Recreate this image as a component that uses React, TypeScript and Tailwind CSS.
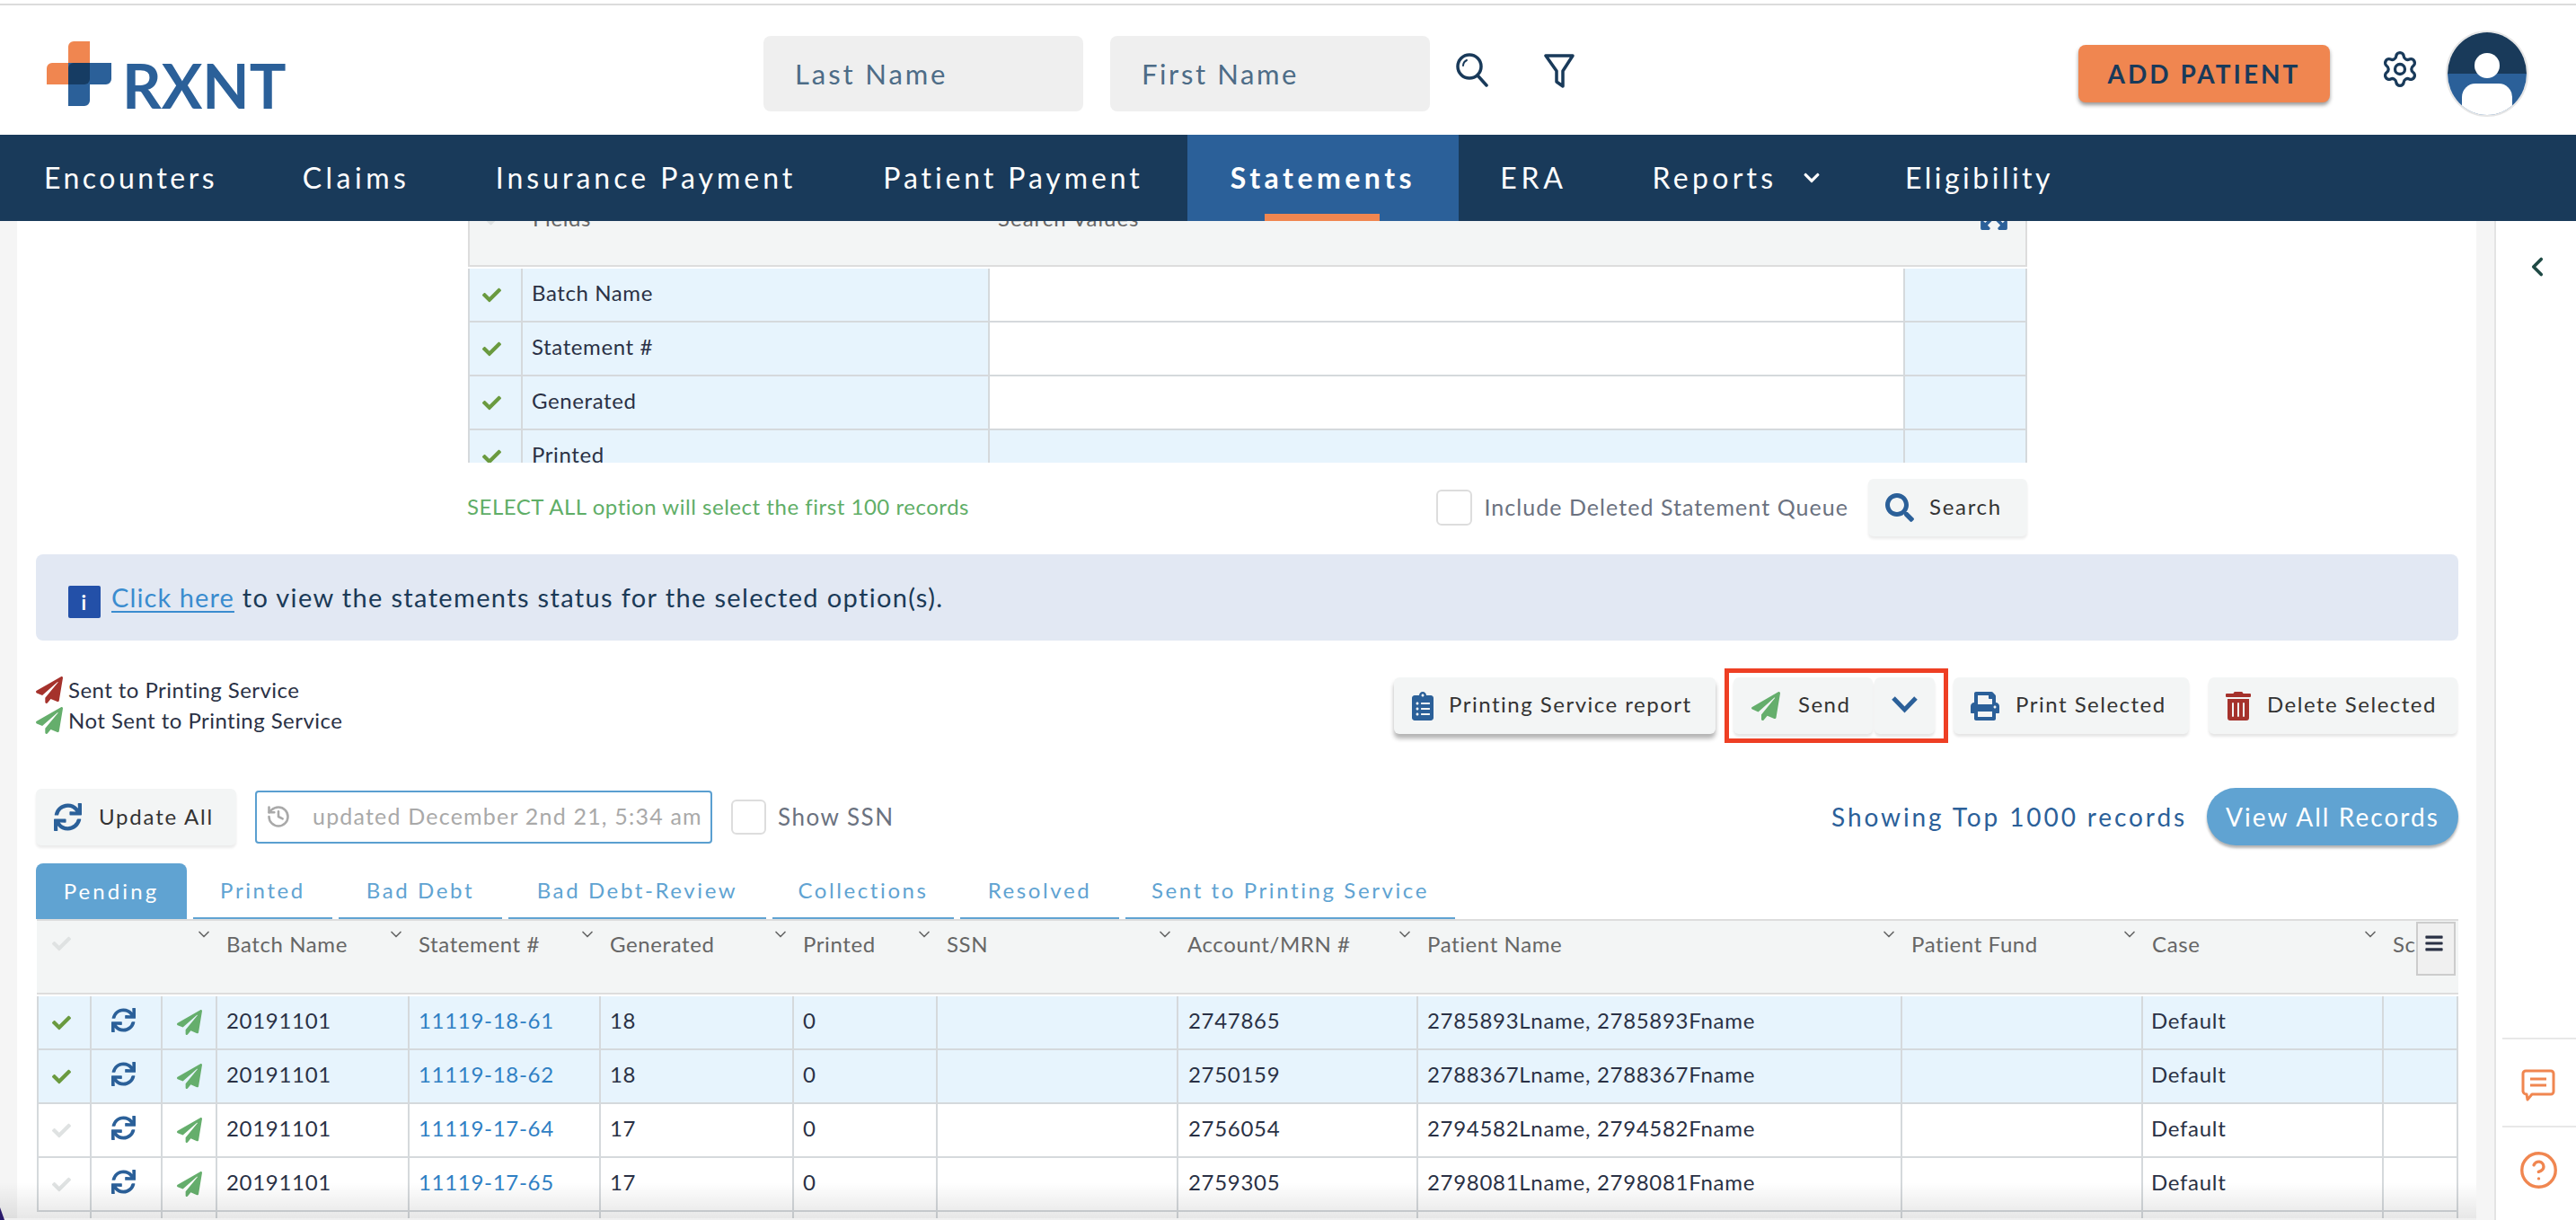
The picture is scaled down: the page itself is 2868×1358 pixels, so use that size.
import React from 'react';
import { ChevronDown, ChevronLeft, CircleHelp, History, Settings } from 'lucide-react';
import {
  FaBars,
  FaCheck,
  FaChevronDown,
  FaClipboardList,
  FaExpandArrowsAlt,
  FaPaperPlane,
  FaPrint,
  FaSearch,
  FaSync,
  FaTrashAlt,
} from 'react-icons/fa';

const navItems = [
  { label: 'Encounters', width: 'w-[287px] tracking-[3.5px]' },
  { label: 'Claims', width: 'w-[215px] tracking-[4.5px]' },
  { label: 'Insurance Payment', width: 'w-[430px] tracking-[4px]' },
  { label: 'Patient Payment', width: 'w-[388px] tracking-[3.9px]' },
  { label: 'Statements', width: 'w-[302px] tracking-[4.5px]', active: true },
  { label: 'ERA', width: 'w-[167px] tracking-[4.8px]' },
  { label: 'Reports', width: 'w-[284px] tracking-[4.3px]', caret: true },
  { label: 'Eligibility', width: 'w-[257px] tracking-[3.5px]' },
];

const tabs = [
  { label: 'Printed', width: 'w-[155px]' },
  { label: 'Bad Debt', width: 'w-[182px]' },
  { label: 'Bad Debt-Review', width: 'w-[287px]' },
  { label: 'Collections', width: 'w-[202px]' },
  { label: 'Resolved', width: 'w-[177px]' },
  { label: 'Sent to Printing Service', width: 'w-[367px]' },
];

const columns = ['Batch Name', 'Statement #', 'Generated', 'Printed', 'SSN', 'Account/MRN #', 'Patient Name', 'Patient Fund', 'Case', 'Sc'];

const rows = [
  { selected: true, statement: '11119-18-61', generated: '18', account: '2747865', patient: '2785893Lname, 2785893Fname' },
  { selected: true, statement: '11119-18-62', generated: '18', account: '2750159', patient: '2788367Lname, 2788367Fname' },
  { selected: false, statement: '11119-17-64', generated: '17', account: '2756054', patient: '2794582Lname, 2794582Fname' },
  { selected: false, statement: '11119-17-65', generated: '17', account: '2759305', patient: '2798081Lname, 2798081Fname' },
];

const gridCols = 'grid grid-cols-[61px_79px_61px_214px_213px_215px_160px_268px_267px_539px_268px_268px_83px]';
const cell = 'border-r-2 border-[#d5d9dc] flex items-center overflow-hidden';

const filterRows = [
  { label: 'Batch Name', blue: false },
  { label: 'Statement #', blue: false },
  { label: 'Generated', blue: false },
  { label: 'Printed', blue: true },
];

const Logo = () => (
  <div className="flex items-start ml-[52px] mt-[46px] h-[72px]">
    <svg width="72" height="72" viewBox="0 0 72 72" className="shrink-0">
      <path d="M24 24V6a6 6 0 0 1 6-6h18v48H0V30a6 6 0 0 1 6-6z" fill="#f08650" />
      <path d="M24 24h48v18a6 6 0 0 1-6 6H48v18a6 6 0 0 1-6 6H24z" fill="#2b6099" />
      <path d="M24 30a6 6 0 0 1 6-6h18v18a6 6 0 0 1-6 6H24z" fill="#163c63" />
    </svg>
    <span className="ml-[12px] mt-[15px] text-[68px] leading-[68px] font-bold text-[#2b6099] font-['Lato',sans-serif]">RXNT</span>
  </div>
);

const Avatar = () => (
  <svg width="92" height="96" viewBox="0 0 92 96" className="shrink-0">
    <defs>
      <clipPath id="avatarClip">
        <ellipse cx="46" cy="48" rx="44" ry="46" />
      </clipPath>
    </defs>
    <ellipse cx="46" cy="48" rx="45" ry="47" fill="#fff" stroke="#e6e6e6" strokeWidth="2" />
    <g clipPath="url(#avatarClip)">
      <rect x="0" y="0" width="92" height="48" fill="#193a5a" />
      <rect x="0" y="48" width="92" height="48" fill="#2b6099" />
      <ellipse cx="46" cy="39" rx="14" ry="14" fill="#fff" />
      <path d="M18 96V74a15 15 0 0 1 15-15h26a15 15 0 0 1 15 15v22z" fill="#fff" />
    </g>
  </svg>
);

const ActionButton = ({ className, children }: { className: string; children: React.ReactNode }) => (
  <button className={`h-[63px] flex items-center bg-[#f3f5f5] rounded-[6px] shadow-[0_3px_3px_rgba(0,0,0,0.1)] text-[24px] text-[#333] tracking-[1.5px] ${className}`}>
    {children}
  </button>
);

export default function App() {
  return (
    <div className="relative w-[2868px] h-[1358px] overflow-hidden flex flex-col bg-white font-['Lato',sans-serif]">
      <header className="h-[150px] shrink-0 flex relative border-t-2 border-[#dcdcdc] mt-[4px] -mb-[4px]">
        <div className="w-[850px] shrink-0 -mt-[6px]">
          <Logo />
        </div>
        <div className="flex mt-[34px] gap-[30px]">
          <div className="w-[356px] h-[84px] rounded-[8px] bg-[#efefef] flex items-center pl-[35px] text-[31px] tracking-[2.9px] text-[#4d6c87]">Last Name</div>
          <div className="w-[356px] h-[84px] rounded-[8px] bg-[#efefef] flex items-center pl-[35px] text-[31px] tracking-[2.6px] text-[#4d6c87]">First Name</div>
        </div>
        <svg width="36" height="38" viewBox="0 0 36 38" fill="none" stroke="#193a5a" strokeWidth="3.5" strokeLinecap="round" className="ml-[29px] mt-[53px]">
          <circle cx="15" cy="15" r="13" />
          <path d="M25 26l9 10" />
          <path d="M8 14a7 7 0 0 1 4-6" strokeWidth="2" />
        </svg>
        <svg width="34" height="40" viewBox="0 0 34 40" fill="none" stroke="#193a5a" strokeWidth="3.5" strokeLinejoin="round" className="ml-[62px] mt-[53px]">
          <path d="M2 3h30L21 20v17l-7-5V20z" />
        </svg>
        <button className="ml-[561px] mt-[44px] w-[280px] h-[64px] rounded-[8px] bg-[#f08650] shadow-[0_3px_4px_rgba(0,0,0,0.4)] text-[#193a5a] font-bold text-[28px] tracking-[3px]">
          ADD PATIENT
        </button>
        <Settings className="ml-[56px] mt-[49px] text-[#193a5a]" size={44} strokeWidth={1.8} />
        <div className="ml-[29px] mt-[28px]">
          <Avatar />
        </div>
      </header>

      <nav className="h-[96px] shrink-0 bg-[#193a5a] flex pl-[2px] relative z-10 text-white text-[32px]">
        {navItems.map(item => (
          <div
            key={item.label}
            className={`${item.width} relative flex items-center justify-center gap-[28px] ${item.active ? 'bg-[#2b6099] font-bold' : ''}`}
          >
            {item.label}
            {item.caret && <FaChevronDown size={20} />}
            {item.active && <div className="absolute bottom-0 left-[86px] w-[128px] h-[8px] bg-[#f08650]" />}
          </div>
        ))}
      </nav>

      <div className="flex-1 flex min-h-0 bg-[#f5f5f5]">
        <main className="ml-[19px] w-[2738px] bg-white overflow-hidden pl-[21px] pr-[20px]">
          <div className="-mt-[25px]">
            <section className="ml-[481px] w-[1736px] h-[294px] overflow-hidden">
              <div className="h-[76px] bg-[#f3f5f5] border-l-2 border-r-2 border-b-2 border-[#dddddd] flex text-[24px] text-[#666] tracking-[0.6px] relative">
                <FaCheck size={20} className="text-[#dfe2e2] ml-[16px] mt-[12px]" />
                <span className="ml-[34px] mt-[4px]">Fields</span>
                <span className="ml-[453px] mt-[4px] tracking-[1px]">Search Values</span>
                <FaExpandArrowsAlt size={34} className="absolute right-[18px] top-[3px] text-[#2b6099]" />
              </div>
              <div className="mt-[2px]">
                {filterRows.map(row => (
                  <div key={row.label} className="grid grid-cols-[61px_520px_1019px_136px] h-[60px] border-b-2 border-[#d5d9dc] text-[24px] text-[#2a3145] tracking-[0.6px]">
                    <div className="bg-[#e7f4fd] border-l-2 border-r-2 border-[#d5d9dc] flex items-center pl-[14px]">
                      <FaCheck size={21} className="text-[#6a9a3f]" />
                    </div>
                    <div className="bg-[#e7f4fd] border-r-2 border-[#d5d9dc] flex items-center pl-[10px] pb-[4px]">{row.label}</div>
                    <div className={`${row.blue ? 'bg-[#e7f4fd]' : 'bg-white'} border-r-2 border-[#d5d9dc]`} />
                    <div className="bg-[#e7f4fd] border-r-2 border-[#d5d9dc]" />
                  </div>
                ))}
              </div>
            </section>

            <section className="mt-[18px] h-[64px] flex items-center ml-[480px] w-[1737px]">
              <span className="text-[24px] tracking-[0.53px] text-[#5fae67] mt-[-2px]">SELECT ALL option will select the first 100 records</span>
              <div className="ml-auto w-[40px] h-[40px] rounded-[6px] border-2 border-[#dddddd] bg-white" />
              <span className="ml-[13px] text-[25px] tracking-[1.05px] text-[#6b7280]">Include Deleted Statement Queue</span>
              <button className="ml-[22px] w-[177px] h-[64px] flex items-center rounded-[6px] bg-[#f3f5f5] shadow-[0_3px_3px_rgba(0,0,0,0.08)] pl-[19px] text-[24px] tracking-[1.7px] text-[#333]">
                <FaSearch size={32} className="text-[#2b6099]" />
                <span className="ml-[17px] pb-[2px]">Search</span>
              </button>
            </section>

            <section className="mt-[20px] h-[96px] rounded-[8px] bg-[#e2e8f3] flex items-center pl-[36px] text-[29px] tracking-[1.35px] text-[#1b3a57]">
              <div className="w-[36px] h-[36px] mt-[10px] rounded-[2px] bg-[#2350a8] text-white text-[22px] font-bold flex items-center justify-center mr-[12px]">i</div>
              <span><a className="text-[#3a8ccf] tracking-[1.1px] underline underline-offset-4">Click here</a> to view the statements status for the selected option(s).</span>
            </section>

            <section className="mt-[31px] h-[83px] flex justify-between">
              <div className="mt-[7px] text-[24px] tracking-[0.45px] text-[#2a3145]">
                <div className="h-[34px] flex items-center gap-[6px]">
                  <FaPaperPlane size={30} className="text-[#a5322c]" />
                  Sent to Printing Service
                </div>
                <div className="h-[34px] flex items-center gap-[6px]">
                  <FaPaperPlane size={30} className="text-[#65ae6c]" />
                  Not Sent to Printing Service
                </div>
              </div>
              <div className="flex items-center mr-[1px]">
                <ActionButton className="w-[358px] pl-[16px] shadow-[0_5px_5px_rgba(0,0,0,0.3)]">
                  <FaClipboardList size={32} className="text-[#2b6099]" />
                  <span className="ml-[13px] pb-[3px]">Printing Service report</span>
                </ActionButton>
                <div className="ml-[10px] w-[249px] h-[83px] border-[5px] border-[#ee3f24] flex items-center pl-[5px] gap-[2px]">
                  <ActionButton className="w-[155px] pl-[20px]">
                    <FaPaperPlane size={32} className="text-[#65ae6c]" />
                    <span className="ml-[20px] pb-[3px]">Send</span>
                  </ActionButton>
                  <ActionButton className="w-[67px] justify-center">
                    <svg width="29" height="19" viewBox="0 0 29 19" fill="none" stroke="#2b6099" strokeWidth="5" className="-mt-[3px]">
                      <path d="M2 2l12.5 13L27 2" />
                    </svg>
                  </ActionButton>
                </div>
                <ActionButton className="ml-[6px] w-[262px] pl-[19px]">
                  <FaPrint size={32} className="text-[#2b6099]" />
                  <span className="ml-[18px] pb-[3px]">Print Selected</span>
                </ActionButton>
                <ActionButton className="ml-[22px] w-[277px] pl-[17px] tracking-[1.3px]">
                  <FaTrashAlt size={32} className="text-[#a5322c]" />
                  <span className="ml-[16px] pb-[3px]">Delete Selected</span>
                </ActionButton>
              </div>
            </section>

            <section className="mt-[50px] h-[64px] flex items-center">
              <button className="w-[223px] h-[63px] flex items-center rounded-[6px] bg-[#f3f5f5] shadow-[0_3px_3px_rgba(0,0,0,0.08)] pl-[20px] text-[24px] tracking-[1.8px] text-[#333]">
                <FaSync size={31} className="text-[#2b6099]" />
                <span className="ml-[19px] pb-[1px]">Update All</span>
              </button>
              <div className="ml-[21px] w-[509px] h-[59px] rounded-[4px] border-2 border-[#5a9fd0] flex items-center pl-[10px] text-[25px] tracking-[1.2px] text-[#a9a9a9]">
                <History size={28} strokeWidth={2.2} />
                <span className="ml-[24px] whitespace-nowrap">updated December 2nd 21, 5:34 am</span>
              </div>
              <div className="ml-[21px] w-[39px] h-[39px] rounded-[6px] border-2 border-[#dddddd]" />
              <span className="ml-[13px] text-[26px] tracking-[1.5px] text-[#6b7280]">Show SSN</span>
              <span className="ml-auto text-[28px] tracking-[2.9px] text-[#2b6099]">Showing Top 1000 records</span>
              <button className="ml-[22px] w-[280px] h-[64px] rounded-full bg-[#60a3d2] shadow-[0_3px_3px_rgba(0,0,0,0.3)] text-white text-[28px] tracking-[2.05px]">
                View All Records
              </button>
            </section>

            <section className="mt-[20px] h-[62px] flex text-[24px] tracking-[2.6px] text-[#60a3d2]">
              <div className="w-[168px] rounded-t-[8px] bg-[#60a3d2] text-white tracking-[3.1px] flex items-center justify-center">Pending</div>
              {tabs.map(tab => (
                <div key={tab.label} className={`${tab.width} ml-[7px] border-b-2 border-[#60a3d2] flex items-center justify-center`}>
                  {tab.label}
                </div>
              ))}
            </section>

            <section className="relative">
              <div className={`${gridCols} ml-[1px] h-[84px] bg-[#f3f5f5] border-t-2 border-b-2 border-[#dddddd] text-[24px] text-[#666] tracking-[0.6px] overflow-hidden`}>
                <div className="pl-[17px] pt-[15px]">
                  <FaCheck size={21} className="text-[#dfe2e2]" />
                </div>
                <div />
                <div className="relative">
                  <ChevronDown size={20} className="absolute right-[5px] top-[5px] text-[#666]" />
                </div>
                {columns.map((col, i) => (
                  <div key={col} className="relative pl-[10px] pt-[8px] whitespace-nowrap overflow-hidden">
                    {col}
                    {i < columns.length - 1 && <ChevronDown size={20} className="absolute right-[5px] top-[5px] text-[#666]" />}
                  </div>
                ))}
              </div>
              <div className="absolute right-[3px] top-[3px] w-[44px] h-[60px] bg-[#f0f0f0] border-2 border-[#cccccc] flex justify-center pt-[11px] pr-[5px]">
                <FaBars size={22} className="text-[#2a3145]" />
              </div>
              <div className="mt-[2px] ml-[1px] text-[24px] text-[#2a3145] tracking-[0.7px]">
                {rows.map(row => (
                  <div key={row.statement} className={`${gridCols} h-[60px] border-b-2 border-[#d5d9dc] ${row.selected ? 'bg-[#e7f4fd]' : 'bg-white'}`}>
                    <div className={`${cell} pl-[15px] border-l-2`}>
                      <FaCheck size={21} className={row.selected ? 'text-[#6a9a3f]' : 'text-[#dfe2e2]'} />
                    </div>
                    <div className={`${cell} justify-center pr-[6px]`}>
                      <FaSync size={27} className="text-[#2b6099] -mt-[6px]" />
                    </div>
                    <div className={`${cell} justify-center`}>
                      <FaPaperPlane size={28} className="text-[#65ae6c]" />
                    </div>
                    <div className={`${cell} pl-[10px] pb-[4px]`}>20191101</div>
                    <div className={`${cell} pl-[10px] pb-[4px] text-[#2f80c4]`}>{row.statement}</div>
                    <div className={`${cell} pl-[10px] pb-[4px]`}>{row.generated}</div>
                    <div className={`${cell} pl-[10px] pb-[4px]`}>0</div>
                    <div className={cell} />
                    <div className={`${cell} pl-[11px] pb-[4px]`}>{row.account}</div>
                    <div className={`${cell} pl-[10px] pb-[4px]`}>{row.patient}</div>
                    <div className={cell} />
                    <div className={`${cell} pl-[9px] pb-[4px]`}>Default</div>
                    <div className={cell} />
                  </div>
                ))}
                <div className={`${gridCols} h-[30px]`}>
                  {Array.from({ length: 13 }).map((_, i) => (
                    <div key={i} className="border-r-2 border-[#d5d9dc]" />
                  ))}
                </div>
              </div>
            </section>
          </div>
        </main>

        <aside className="ml-[20px] w-[91px] bg-white border-l-2 border-[#e4e4e4] flex flex-col">
          <ChevronLeft size={34} strokeWidth={2.6} className="ml-[29px] mt-[34px] text-[#1f4a45]" />
          <div className="mt-auto ml-[7px] border-t-2 border-[#e8e8e8] h-[98px] flex items-center pt-[6px] pl-[21px]">
            <svg width="38" height="36" viewBox="0 0 38 36" fill="none" stroke="#f08650" strokeWidth="3" strokeLinejoin="round">
              <path d="M5 2h28a3 3 0 0 1 3 3v20a3 3 0 0 1-3 3H12l-5 6-1-6a4 4 0 0 1-4-3V5a3 3 0 0 1 3-3z" />
              <path d="M10 11h18M10 18h18" />
            </svg>
          </div>
          <div className="ml-[7px] border-t-2 border-[#e8e8e8] h-[105px] flex items-start pt-[25px] pl-[18px]">
            <CircleHelp size={45} strokeWidth={1.8} className="text-[#f08650]" />
          </div>
        </aside>
      </div>

      <div className="absolute left-0 right-[111px] bottom-[2px] h-[40px] bg-gradient-to-b from-transparent to-[#00000018] pointer-events-none" />
      <div className="absolute left-0 right-[111px] bottom-0 h-[2px] bg-[#f0f0f0]" />
      <svg width="6" height="14" viewBox="0 0 6 14" className="absolute left-0 bottom-0">
        <path d="M0 0L5 14H0z" fill="#2a1a6b" />
      </svg>
    </div>
  );
}
